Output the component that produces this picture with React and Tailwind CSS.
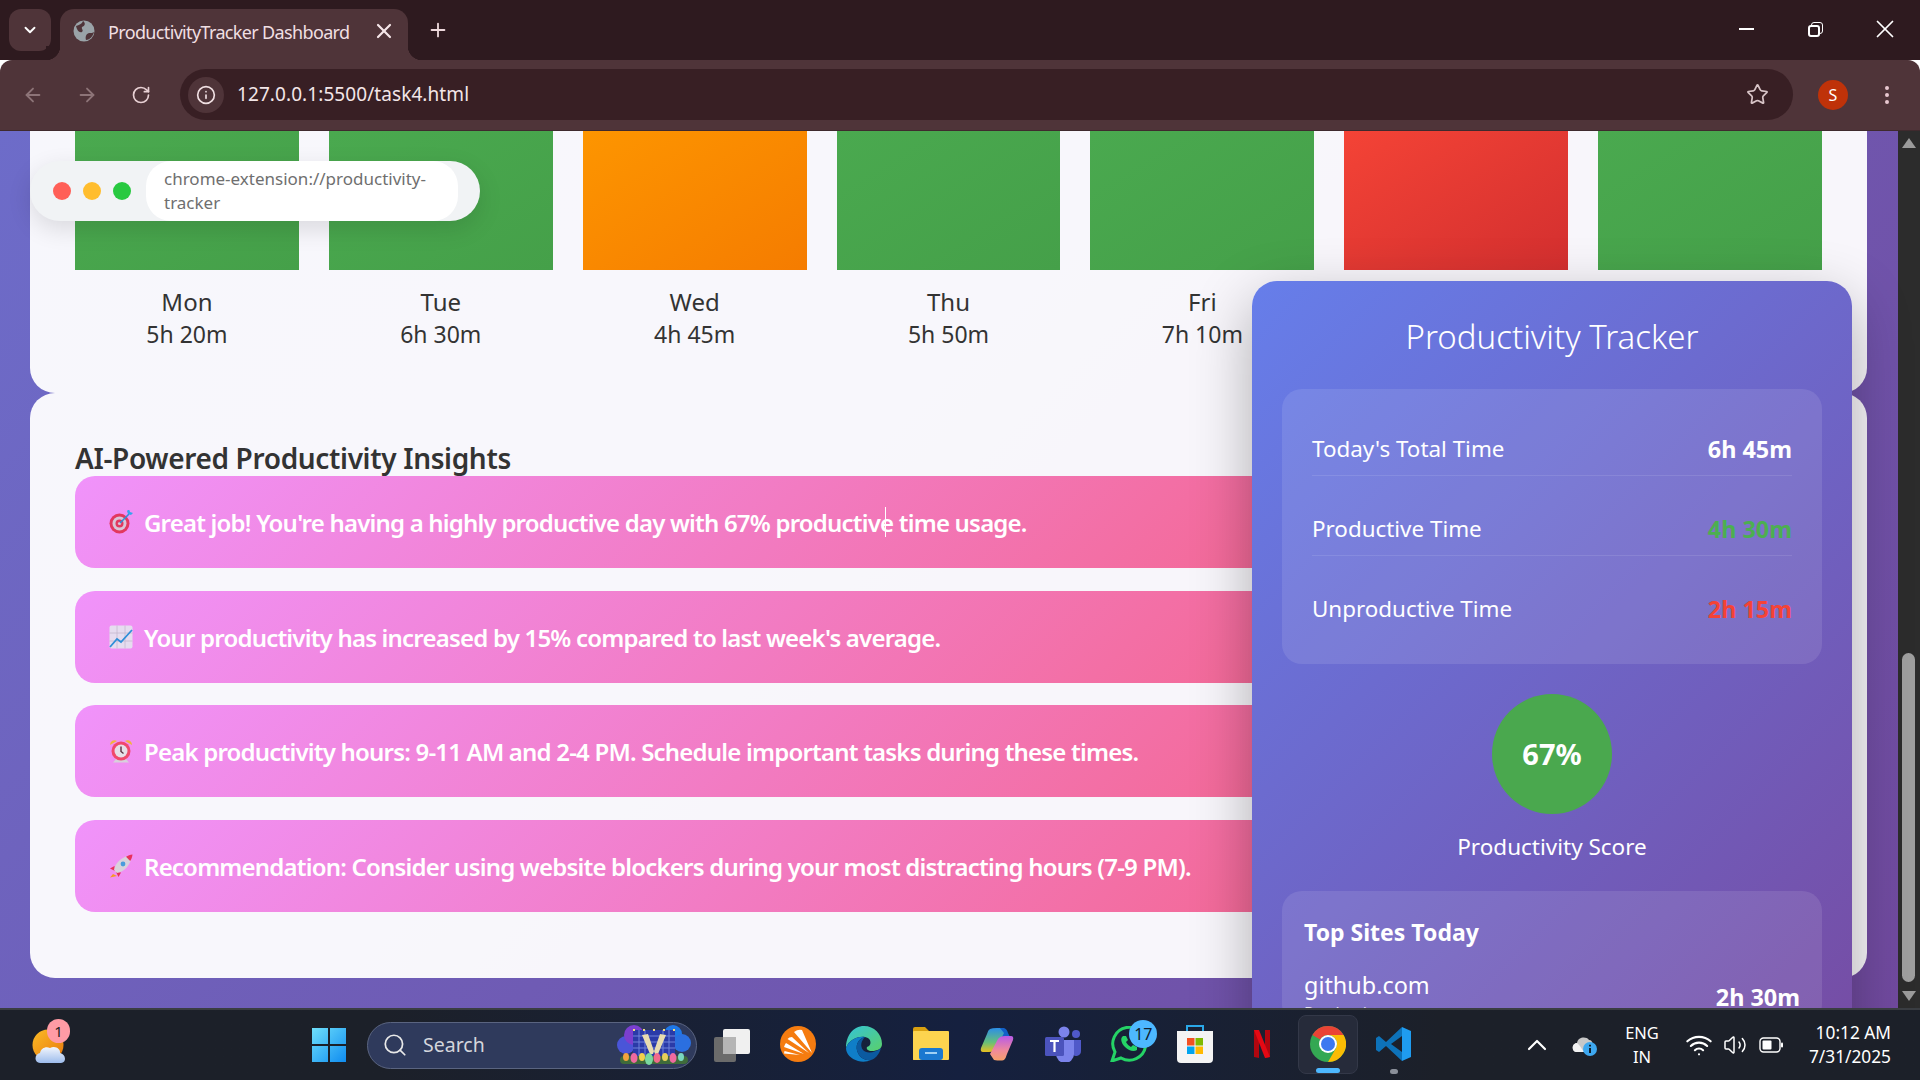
import React from "react";
import {
  ArrowLeft,
  ArrowRight,
  ChevronDown,
  ChevronUp,
  EllipsisVertical,
  Info,
  Plus,
  RotateCw,
  Search,
  Star,
  Volume2,
  Wifi,
  X,
} from "lucide-react";

const FONT = "font-['Noto_Sans',sans-serif]";

// Sat and Sun labels sit behind the popup, so only their bars show
const days = [
  { name: "Mon", time: "5h 20m", bar: "from-[#4aa94f] to-[#45a049]" },
  { name: "Tue", time: "6h 30m", bar: "from-[#4aa94f] to-[#45a049]" },
  { name: "Wed", time: "4h 45m", bar: "from-[#fd9500] to-[#f57c00]" },
  { name: "Thu", time: "5h 50m", bar: "from-[#4aa94f] to-[#45a049]" },
  { name: "Fri", time: "7h 10m", bar: "from-[#4aa94f] to-[#45a049]" },
  { name: "", time: "", bar: "from-[#f44336] to-[#d32f2f]" },
  { name: "", time: "", bar: "from-[#4aa94f] to-[#45a049]" },
];

function TargetIcon() {
  return (
    <svg width="24" height="24" viewBox="0 0 24 24">
      <circle cx="10.5" cy="13.5" r="10" fill="#e2385f" />
      <circle cx="10.5" cy="13.5" r="7" fill="#d9c5d8" />
      <circle cx="10.5" cy="13.5" r="4" fill="#e2385f" />
      <circle cx="10.5" cy="13.5" r="1.6" fill="#d9c5d8" />
      <path d="M11 13 L20 4" stroke="#2f8fd8" strokeWidth="1.6" />
      <path d="M18 1 l1 3 3 1 2-2-3-1-1-3z" fill="#35a4ef" />
    </svg>
  );
}

function ChartIcon() {
  return (
    <svg width="24" height="24" viewBox="0 0 24 24">
      <rect x="0.5" y="0.5" width="23" height="23" rx="2" fill="#e6dcef" />
      <path d="M0.5 8h23M0.5 16h23M8 0.5v23M16 0.5v23" stroke="#c4b8cf" strokeWidth="0.8" />
      <path d="M1 22 L8 14 L12 17 L23 5" fill="none" stroke="#2f8fd8" strokeWidth="1.8" />
    </svg>
  );
}

function ClockIcon() {
  return (
    <svg width="24" height="24" viewBox="0 0 24 24">
      <path d="M1 6 C1 2 5 0 8 2z" fill="#f2b33d" />
      <path d="M23 6 C23 2 19 0 16 2z" fill="#f2b33d" />
      <path d="M4 23.5 L8 19 H16 L20 23.5z" fill="#d8d0dc" />
      <circle cx="12" cy="12" r="9.5" fill="#f0486c" />
      <circle cx="12" cy="12" r="6.5" fill="#e6dfe8" />
      <path d="M12 7.5v5l2.5 2" fill="none" stroke="#5a3040" strokeWidth="1.4" />
    </svg>
  );
}

function RocketIcon() {
  return (
    <svg width="24" height="24" viewBox="0 0 24 24">
      <path d="M4 20 L1 23.5 L8 22z" fill="#f59a23" />
      <path d="M5.5 12 L1 14.5 L6 17z" fill="#e8305c" />
      <path d="M12 18.5 L9.5 23 L7 18z" fill="#e8305c" />
      <path d="M5 16 C6 9 13 3 19 2 L22 5 C21 11 15 18 8 19z" fill="#d9d2dc" />
      <path d="M17 2.8 C19 1.5 21 0.8 23.5 0.5 C23.2 3 22.5 5 21.2 7z" fill="#e8305c" />
      <circle cx="14" cy="10" r="2.4" fill="#4a9ddc" />
    </svg>
  );
}

const insights = [
  { icon: <TargetIcon />, text: "Great job! You're having a highly productive day with 67% productive time usage." },
  { icon: <ChartIcon />, text: "Your productivity has increased by 15% compared to last week's average." },
  { icon: <ClockIcon />, text: "Peak productivity hours: 9-11 AM and 2-4 PM. Schedule important tasks during these times." },
  { icon: <RocketIcon />, text: "Recommendation: Consider using website blockers during your most distracting hours (7-9 PM)." },
];

function GlobeIcon() {
  return (
    <svg width="22" height="22" viewBox="0 0 22 22">
      <circle cx="11" cy="11" r="10.5" fill="#9aa3a8" />
      <path d="M3 6 C6 5 9 4 10 1 C13 3 12 6 9 7 C8 9 11 10 9 12 C6 13 4 10 3 6z M13 20 C12 17 13 14 16 13 C18 13 20 13 21 12 C20 16 17 20 13 20z" fill="#4f3439" />
    </svg>
  );
}

function WeatherIcon() {
  return (
    <svg width="40" height="42" viewBox="0 0 40 42">
      <defs>
        <linearGradient id="sun" x1="0" y1="0" x2="1" y2="1">
          <stop offset="0" stopColor="#fbbb25" />
          <stop offset="1" stopColor="#e8780e" />
        </linearGradient>
        <linearGradient id="cloud" x1="0" y1="0" x2="0" y2="1">
          <stop offset="0" stopColor="#f2f6fd" />
          <stop offset="1" stopColor="#9dbcec" />
        </linearGradient>
      </defs>
      <circle cx="18" cy="21" r="15.5" fill="url(#sun)" />
      <path d="M10 39 C4 39 4 30 10 29 C11 24 16 22 20 24 C25 21 31 25 30 29 C36 30 37 39 31 39z" fill="url(#cloud)" />
    </svg>
  );
}

function WindowsIcon() {
  return (
    <svg width="36" height="36" viewBox="0 0 36 36">
      <defs>
        <linearGradient id="win" x1="0" y1="0" x2="1" y2="1">
          <stop offset="0" stopColor="#6fe0fb" />
          <stop offset="1" stopColor="#0f8cf0" />
        </linearGradient>
      </defs>
      <path d="M1 1h16v16H1zM19 1h16v16H19zM1 19h16v16H1zM19 19h16v16H19z" fill="url(#win)" />
    </svg>
  );
}

function SearchArt() {
  return (
    <svg width="74" height="40" viewBox="0 0 74 40">
      <circle cx="9" cy="20" r="9" fill="#4a55d8" />
      <circle cx="17" cy="10" r="10" fill="#7b3fd0" />
      <circle cx="56" cy="9" r="9" fill="#1f78e8" />
      <circle cx="65" cy="18" r="9" fill="#2b6fe0" />
      <rect x="16" y="5" width="42" height="27" fill="#2a3aa8" />
      <path d="M16 11h42M16 17h42M16 23h42M22 5v27M52 5v27M28 5v27M46 5v27" stroke="#6f82dc" strokeWidth="1" />
      <path d="M16 5h42" stroke="#f0dc80" strokeWidth="2" strokeDasharray="2 8" />
      <path d="M25 10 L33 29 H38 L31 9z M49 10 L41 29 H36 L43 9z" fill="#e8dcb0" />
      <rect x="3" y="31" width="68" height="8" rx="4" fill="#3f6b3a" />
      <ellipse cx="9" cy="32" rx="3" ry="4" fill="#f2a33c" />
      <ellipse cx="17" cy="33" rx="3.5" ry="5" fill="#ef6aa0" />
      <ellipse cx="25" cy="32" rx="3" ry="4" fill="#f2d04c" />
      <ellipse cx="32" cy="34" rx="4" ry="6" fill="#7ad8a0" />
      <ellipse cx="40" cy="33" rx="3.5" ry="5" fill="#f06a8c" />
      <ellipse cx="48" cy="32" rx="3" ry="4" fill="#e8d05a" />
      <ellipse cx="56" cy="33" rx="3.5" ry="5" fill="#ef6aa0" />
      <ellipse cx="64" cy="32" rx="3" ry="4" fill="#7ad8c0" />
    </svg>
  );
}

function TaskViewIcon() {
  return (
    <svg width="36" height="36" viewBox="0 0 36 36">
      <rect x="9" y="3" width="27" height="25" rx="2" fill="#f0f0f0" />
      <rect x="0" y="11" width="22" height="25" rx="2" fill="#6b6b6b" />
      <rect x="9" y="11" width="13" height="17" fill="#b5b5b5" />
    </svg>
  );
}

function OrangeAppIcon() {
  return (
    <svg width="36" height="36" viewBox="0 0 36 36">
      <circle cx="18" cy="18" r="18" fill="#f57c10" />
      <path d="M14 6 Q18 3 22 4 L32 27z M7.5 13 Q9 11 12 11 L29 27z M4 21 Q5 18 6 17 L24 28z M4.5 25 L20 29 L4 27.5z" fill="#fff" />
    </svg>
  );
}

function EdgeIcon() {
  return (
    <svg width="36" height="36" viewBox="0 0 36 36">
      <defs>
        <linearGradient id="edgeA" x1="0" y1="0" x2="1" y2="1">
          <stop offset="0" stopColor="#34c3d8" />
          <stop offset="1" stopColor="#5ad06a" />
        </linearGradient>
      </defs>
      <path d="M18 0 C28 0 36 8 36 18 C36 23 31 25 26 25 C22 25 20 23 21 21 C26 20 26 12 19 11 C11 10 3 14 0 22 C0 10 7 0 18 0z" fill="url(#edgeA)" />
      <path d="M0 22 C3 14 11 10 19 11 C11 13 9 21 12 27 C14 32 20 35 25 34 C21 36 16 36 12 35 C5 33 0 28 0 22z" fill="#0f7ec8" />
      <path d="M12 27 C9 21 11 13 19 11 C15 15 14 20 17 24 C20 28 29 27 35 22 C33 29 29 33 25 34 C20 35 14 32 12 27z" fill="#0b5aa0" />
    </svg>
  );
}

function FolderIcon() {
  return (
    <svg width="36" height="36" viewBox="0 0 36 36">
      <path d="M0 3 a2 2 0 0 1 2-2h10l4 4h18v29H0z" fill="#d9a010" />
      <rect x="0" y="5" width="36" height="29" rx="1" fill="#fdd44f" />
      <rect x="6" y="22" width="24" height="12" rx="3" fill="#1a78d0" />
      <rect x="12" y="26" width="12" height="2" fill="#9fd0f5" />
    </svg>
  );
}

function CopilotIcon() {
  return (
    <svg width="34" height="34" viewBox="0 0 34 34">
      <defs>
        <linearGradient id="copA" x1="0" y1="0" x2="0" y2="1">
          <stop offset="0" stopColor="#2b8de8" />
          <stop offset="0.6" stopColor="#66c07a" />
          <stop offset="1" stopColor="#e8c020" />
        </linearGradient>
        <linearGradient id="copB" x1="0" y1="0" x2="0" y2="1">
          <stop offset="0" stopColor="#b85ae8" />
          <stop offset="0.6" stopColor="#f08a9a" />
          <stop offset="1" stopColor="#f6a06a" />
        </linearGradient>
      </defs>
      <path d="M20 1 H24 Q27 2 28 6 L30 10 H22z" fill="#1260c8" />
      <path d="M10 2 Q13 0.5 20 1 L24 6 L16 22 Q14 25 9 25 H3 Q0 25 1 21 L7 7 Q8 3 10 2z" fill="url(#copA)" />
      <path d="M24 33 Q21 34 14 33 L10 27 L18 12 Q20 9 25 9 H31 Q34 9 33 13 L27 27 Q26 31 24 33z" fill="url(#copB)" />
    </svg>
  );
}

function TeamsIcon() {
  return (
    <svg width="36" height="36" viewBox="0 0 36 36">
      <circle cx="19" cy="6" r="5.5" fill="#7b83eb" />
      <circle cx="31" cy="8" r="4" fill="#5059c9" />
      <path d="M27 14h9v11a5 5 0 0 1-9 3z" fill="#5059c9" />
      <path d="M11 14h18v14a9 9 0 0 1-18 0z" fill="#7b83eb" />
      <rect x="0" y="11" width="19" height="19" rx="1.5" fill="#4b53bc" />
      <path d="M5 15h9M9.5 15v11" stroke="#fff" strokeWidth="2.2" />
    </svg>
  );
}

function WhatsAppIcon() {
  return (
    <svg width="38" height="36" viewBox="0 0 38 36">
      <path d="M2 35 L5 26 A16.5 16.5 0 1 1 11 32z" fill="none" stroke="#25d366" strokeWidth="3" />
      <path d="M13 10 C10 12 11 17 15 21 C19 25 24 26 27 24 L27 21 L23 19 L21 21 C19 20 17 18 16 16 L18 14 L16 10z" fill="#25d366" />
    </svg>
  );
}

function StoreIcon() {
  return (
    <svg width="36" height="38" viewBox="0 0 36 38">
      <path d="M10 6 V1 H26 V6" fill="none" stroke="#2aa8e8" strokeWidth="2" />
      <path d="M0 6h36v28a4 4 0 0 1-4 4H4a4 4 0 0 1-4-4z" fill="#f4f4f4" />
      <rect x="10" y="13" width="7.5" height="7.5" fill="#f25022" />
      <rect x="18.5" y="13" width="7.5" height="7.5" fill="#7fba00" />
      <rect x="10" y="21.5" width="7.5" height="7.5" fill="#00a4ef" />
      <rect x="18.5" y="21.5" width="7.5" height="7.5" fill="#ffb900" />
    </svg>
  );
}

function NetflixIcon() {
  return (
    <svg width="16" height="28" viewBox="0 0 16 28">
      <path d="M0 0h5v28l-5 -1z M11 0h5v27l-5 1z" fill="#b1060f" />
      <path d="M0 0h5l11 27 -5 1z" fill="#e50914" />
    </svg>
  );
}

function ChromeIcon() {
  return (
    <svg width="36" height="36" viewBox="0 0 36 36">
      <circle cx="18" cy="18" r="18" fill="#34a853" />
      <path d="M18 0 A18 18 0 0 1 33.6 9 H18 A9 9 0 0 0 10.2 13.5 L2.4 9 A18 18 0 0 1 18 0z" fill="#ea4335" />
      <path d="M33.6 9 A18 18 0 0 1 18 36 L25.8 22.5 A9 9 0 0 0 18 9z" fill="#fbbc04" />
      <circle cx="18" cy="18" r="9" fill="#fff" />
      <circle cx="18" cy="18" r="7" fill="#3b78f0" />
    </svg>
  );
}

function VSCodeIcon() {
  return (
    <svg width="36" height="36" viewBox="0 0 36 36">
      <path d="M26 1 L10 16 L3 10 L0 12 V24 L3 26 L10 20 L26 35 V26 L15 18 L26 10z" fill="#0d72b9" />
      <path d="M26 1 L35 5 V31 L26 35z" fill="#1f9cf0" />
    </svg>
  );
}

function CloudInfoIcon() {
  return (
    <svg width="26" height="26" viewBox="0 0 26 26">
      <path d="M4 20 C-1 19 0 11 5 11 C6 5 14 4 17 8 C20 8 21 11 20 13 L12 20z" fill="#c8c8c8" />
      <path d="M4 20 C-1 19 0 11 5 11 C8 13 9 16 12 20z" fill="#f2f2f2" />
      <circle cx="18" cy="17" r="7" fill="#3ea8f0" />
      <path d="M18 16v5M18 12.8v1.6" stroke="#10202c" strokeWidth="2" />
    </svg>
  );
}

function BatteryIcon() {
  return (
    <svg width="24" height="16" viewBox="0 0 24 16">
      <rect x="1" y="1" width="20" height="14" rx="3.5" fill="none" stroke="#fff" strokeWidth="1.4" />
      <rect x="3.5" y="3.5" width="9" height="9" rx="1" fill="#fff" />
      <rect x="22" y="5.5" width="2" height="5" rx="1" fill="#fff" />
    </svg>
  );
}

function Stat({ label, value, color, line }) {
  return (
    <div className={`flex h-[80px] justify-between pt-[40px] leading-[26px] ${line ? "border-b border-white/10" : ""}`}>
      <span className="text-[22.4px] text-white">{label}</span>
      <span className={`text-[23.4px] font-bold ${color}`}>{value}</span>
    </div>
  );
}

function TaskIcon({ children, className = "" }) {
  return <div className={`relative -mt-[2px] flex h-[59px] w-[66.2px] items-center justify-center ${className}`}>{children}</div>;
}

export default function App() {
  return (
    <div className={`flex h-[1080px] w-[1920px] flex-col overflow-hidden ${FONT}`}>
      {/* browser chrome */}
      <div className="relative flex h-[60px] shrink-0 items-start bg-[#2e1a1f] pl-[9px] pt-[9px]">
        <div className="flex h-[42px] w-[42px] items-center justify-center rounded-[12px] bg-[#4f3439] text-white">
          <ChevronDown size={18} strokeWidth={2.5} />
        </div>
        <div className="relative ml-[9px] flex h-[51px] w-[348px] items-center rounded-t-[14px] bg-[#4f3439] pb-[8px] pl-[13px] pr-[12px]">
          <div className="absolute -left-[14px] bottom-0 h-[14px] w-[14px] bg-[radial-gradient(circle_at_0_0,#2e1a1f_14px,#4f3439_14.5px)]" />
          <div className="absolute -right-[14px] bottom-0 h-[14px] w-[14px] bg-[radial-gradient(circle_at_100%_0,#2e1a1f_14px,#4f3439_14.5px)]" />
          <GlobeIcon />
          <span className="ml-[13px] mt-[3px] flex-1 text-[18px] tracking-[-0.65px] text-[#f0dfe2]">ProductivityTracker Dashboard</span>
          <X size={24} strokeWidth={2.2} className="text-[#f5e6e8]" />
        </div>
        <Plus size={22} strokeWidth={2} className="ml-[19px] mt-[10px] text-[#eed9dc]" />
        <div className="ml-auto flex h-[40px] items-center pr-[20px] text-white">
          <div className="h-[2px] w-[15px] bg-white" />
          <div className="relative ml-[54px] h-[15px] w-[15px]">
            <div className="absolute left-[3px] top-0 h-[12px] w-[12px] rounded-[3px] border border-white" />
            <div className="absolute bottom-0 left-0 h-[12px] w-[12px] rounded-[3px] border-2 border-white bg-[#2e1a1f]" />
          </div>
          <X size={30} strokeWidth={1.4} className="ml-[47px]" />
        </div>
      </div>
      <div className="flex h-[70px] shrink-0 items-center rounded-t-[12px] bg-[#4f3439] pb-[1px] pl-[22px] pr-[21px]">
        <ArrowLeft size={22} className="text-[#8d7478]" />
        <ArrowRight size={22} className="ml-[32px] text-[#8d7478]" />
        <RotateCw size={20} className="ml-[33px] text-[#e8d0d4]" />
        <div className="ml-[29px] flex h-[51px] flex-1 items-center rounded-full bg-[#381f24] pl-[8px] pr-[24px]">
          <div className="flex h-[36px] w-[36px] items-center justify-center rounded-full bg-[#4f3439]">
            <Info size={20} className="text-[#f0dfe2]" />
          </div>
          <span className="ml-[13px] flex-1 text-[19px] tracking-[0.08px] text-[#f3e6e8]">127.0.0.1:5500/task4.html</span>
          <Star size={23} strokeWidth={1.8} className="text-[#d8c4c7]" />
        </div>
        <div className="ml-[25px] flex h-[30px] w-[30px] items-center justify-center rounded-full bg-[#bf3209] text-[16px] text-white">S</div>
        <EllipsisVertical size={24} className="ml-[27px] text-[#e8c8d0]" />
      </div>
      <div className="h-px shrink-0 bg-[#3f2a2e]" />

      {/* page viewport */}
      <div className="relative flex h-[877px] shrink-0 overflow-hidden">
        <div className="h-full w-[1898px] bg-[linear-gradient(135deg,#6d6cc9,#714a9f)] pl-[30px] pr-[31px]">
          <div className="h-[262px] rounded-b-[25px] bg-white/95 px-[45px]">
            <div className="grid grid-cols-7 gap-[30px]">
              {days.map((d, i) => (
                <div key={i} className="text-center">
                  <div className={`h-[139px] bg-gradient-to-br ${d.bar}`} />
                  <div className="mt-[16px] text-[24px] leading-[32px] text-[#333]">{d.name}</div>
                  <div className="text-[23px] leading-[32px] text-[#333]">{d.time}</div>
                </div>
              ))}
            </div>
          </div>
          <div className="h-[585px] rounded-[25px] bg-white/95 px-[45px] pt-[47px]">
            <h2 className="text-[28px] font-semibold leading-[36px] tracking-[-0.35px] text-[#333]">AI-Powered Productivity Insights</h2>
            <div className="flex flex-col gap-[22.6px]">
              {insights.map((item, i) => (
                <div key={item.text} className="relative flex h-[92px] items-center gap-[11px] rounded-[20px] bg-[linear-gradient(135deg,#f093fb,#f5576c)] pl-[34px] text-[24px] font-semibold tracking-[-0.8px] text-white">
                  {item.icon}
                  <span className="mt-[2px]">{item.text}</span>
                  {i === 0 && <div className="absolute left-[810px] top-[31px] h-[30px] w-px bg-white" />}
                </div>
              ))}
            </div>
          </div>
        </div>
        <div className="relative w-[22px] bg-[#2c2c2c]">
          <div className="absolute left-1/2 top-[7px] h-0 w-0 -translate-x-1/2 border-x-[7px] border-b-[10px] border-x-transparent border-b-[#9b9b9b]" />
          <div className="absolute left-[4px] top-[522px] h-[329px] w-[13px] rounded-full bg-[#9f9f9f]" />
          <div className="absolute bottom-[7px] left-1/2 h-0 w-0 -translate-x-1/2 border-x-[7px] border-t-[10px] border-x-transparent border-t-[#9b9b9b]" />
        </div>

        {/* fixed window bar */}
        <div className="absolute left-[30px] top-[30px] flex h-[60px] w-[450px] items-center rounded-[30px] bg-[#f1f3f5] pl-[23px] pr-[22px] shadow-[0_8px_24px_rgba(0,0,0,0.12)]">
          <div className="h-[18px] w-[18px] rounded-full bg-[#ff5f57]" />
          <div className="ml-[12px] h-[18px] w-[18px] rounded-full bg-[#ffbd2e]" />
          <div className="ml-[12px] h-[18px] w-[18px] rounded-full bg-[#28c940]" />
          <div className="ml-[15px] flex h-[60px] flex-1 items-center rounded-[25px] bg-white px-[18px] text-[17px] leading-[24px] text-[#6f6f6f]">
            chrome-extension://productivity-tracker
          </div>
        </div>

        {/* extension popup */}
        <div className="absolute left-[1252px] top-[150px] h-[800px] w-[600px] rounded-[25px] bg-[linear-gradient(135deg,#667eea,#764ba2)] p-[30px] text-white shadow-[0_20px_60px_rgba(0,0,0,0.3)]">
          <h1 className="text-center text-[33px] font-light leading-[52px]">Productivity Tracker</h1>
          <div className="mt-[26px] h-[275px] rounded-[20px] bg-white/10 px-[30px] pt-[7px]">
            <Stat label="Today's Total Time" value="6h 45m" color="text-white" line />
            <Stat label="Productive Time" value="4h 30m" color="text-[#4caf50]" line />
            <Stat label="Unproductive Time" value="2h 15m" color="text-[#f44336]" />
          </div>
          <div className="mt-[30px] flex flex-col items-center">
            <div className="flex h-[120px] w-[120px] items-center justify-center rounded-full bg-[#4aa84e] text-[29px] font-bold">67%</div>
            <div className="mt-[17px] text-[22.5px] leading-[32px]">Productivity Score</div>
          </div>
          <div className="mt-[28px] rounded-[20px] bg-white/10 px-[22px] pt-[23px]">
            <div className="text-[23px] font-bold leading-[36px]">Top Sites Today</div>
            <div className="mt-[18px] flex items-center justify-between">
              <div>
                <div className="text-[23.4px] leading-[34px]">github.com</div>
                <div className="text-[16px] leading-[22px] text-white/80">Productive</div>
              </div>
              <div className="mt-[3px] text-[23.4px] font-bold">2h 30m</div>
            </div>
          </div>
        </div>
      </div>

      {/* taskbar */}
      <div className="flex h-[72px] shrink-0 items-center border-t-2 border-[#3a3d42] bg-gradient-to-r from-[#1c2029] from-20% via-[#15203f] to-[#1c2029] to-75%">
        <div className="relative ml-[30px] w-[40px]">
          <WeatherIcon />
          <div className="absolute -top-[5px] left-[17px] flex h-[24px] w-[23px] items-center justify-center rounded-full bg-[#ff9ba5] text-[15px] text-[#222]">1</div>
        </div>
        <div className="ml-[241px]">
          <WindowsIcon />
        </div>
        <div className="ml-[20px] flex h-[47px] w-[330px] items-center rounded-full border border-[#5a6480] bg-[#2f3a5c] pl-[14px] pr-[5px]">
          <Search size={26} strokeWidth={1.6} className="text-[#e8e8e8]" />
          <span className="ml-[15px] flex-1 text-[19.5px] text-[#d4d6dc]">Search</span>
          <SearchArt />
        </div>
        <TaskIcon className="ml-[2px]"><TaskViewIcon /></TaskIcon>
        <TaskIcon><OrangeAppIcon /></TaskIcon>
        <TaskIcon><EdgeIcon /></TaskIcon>
        <TaskIcon><FolderIcon /></TaskIcon>
        <TaskIcon><CopilotIcon /></TaskIcon>
        <TaskIcon><TeamsIcon /></TaskIcon>
        <TaskIcon>
          <WhatsAppIcon />
          <div className="absolute right-[5px] top-[5px] flex h-[28px] w-[28px] items-center justify-center rounded-full bg-[#4db8ff] text-[16px] text-[#10202c]">17</div>
        </TaskIcon>
        <TaskIcon><StoreIcon /></TaskIcon>
        <TaskIcon><NetflixIcon /></TaskIcon>
        <TaskIcon>
          <div className="relative flex h-[59px] w-[60px] items-center justify-center rounded-[8px] border border-[#333848] bg-[#262b3a]">
            <ChromeIcon />
            <div className="absolute bottom-0 left-1/2 h-[5px] w-[24px] -translate-x-1/2 rounded-full bg-[#4db8ff]" />
          </div>
        </TaskIcon>
        <TaskIcon>
          <VSCodeIcon />
          <div className="absolute bottom-0 left-1/2 h-[5px] w-[8px] -translate-x-1/2 rounded-full bg-[#8a8f99]" />
        </TaskIcon>
        <div className="ml-auto flex items-center pr-[29px] text-white">
          <ChevronUp size={32} strokeWidth={1.6} />
          <div className="ml-[19px]"><CloudInfoIcon /></div>
          <div className="ml-[27px] w-[34px] text-center text-[16.5px] leading-[24px]">
            <div>ENG</div>
            <div>IN</div>
          </div>
          <Wifi size={28} strokeWidth={1.8} className="ml-[26px]" />
          <Volume2 size={24} strokeWidth={1.5} className="ml-[10px]" />
          <div className="ml-[12px]"><BatteryIcon /></div>
          <div className="ml-[25px] w-[83px] text-right text-[17.3px] leading-[24px]">
            <div>10:12 AM</div>
            <div>7/31/2025</div>
          </div>
        </div>
      </div>
    </div>
  );
}
